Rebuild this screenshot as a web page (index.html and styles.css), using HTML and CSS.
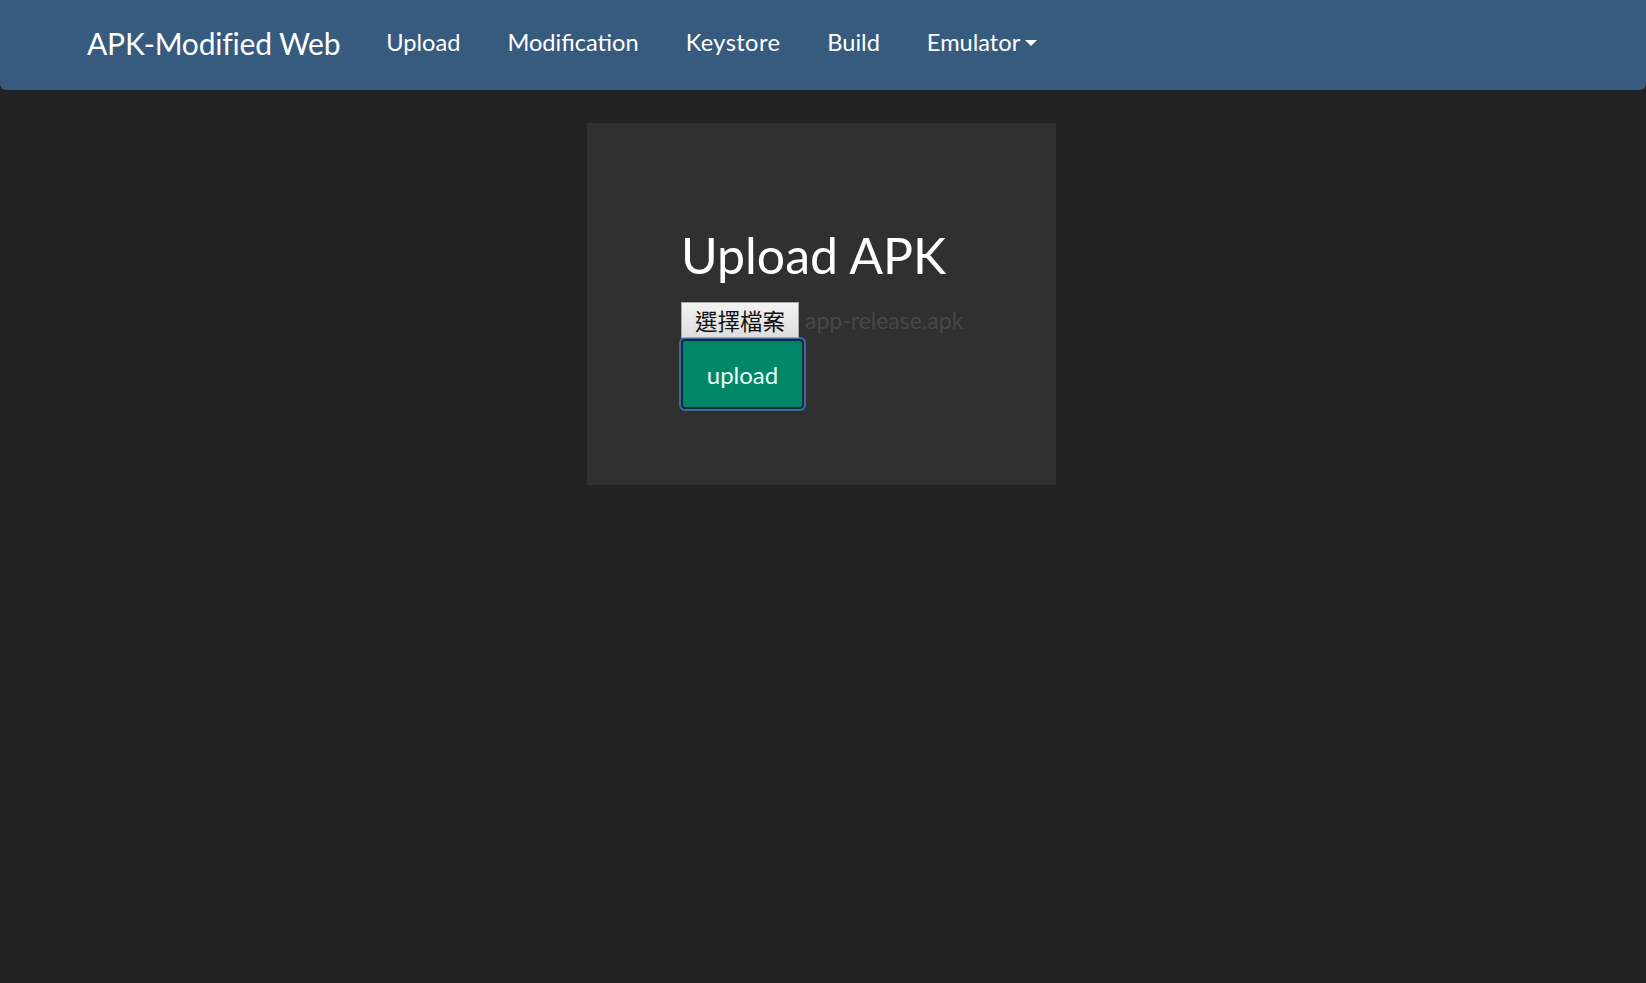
FILE: index.html
```html
<!DOCTYPE html>
<html lang="en">
<head>
<meta charset="utf-8">
<title>APK-Modified Web</title>
<link rel="stylesheet" href="styles.css">
</head>
<body>
<nav class="navbar">
  <a class="brand" href="#">APK-Modified Web</a>
  <ul class="nav">
    <li><a href="#">Upload</a></li>
    <li><a href="#">Modification</a></li>
    <li><a href="#" class="wide">Keystore</a></li>
    <li><a href="#">Build</a></li>
    <li><a href="#" class="dropdown">Emulator<span class="caret"></span></a></li>
  </ul>
</nav>
<main class="main">
  <section class="card">
    <h1 class="title">Upload APK</h1>
    <div class="file-row">
      <span class="file-btn">選擇檔案</span>
      <span class="file-name">app-release.apk</span>
    </div>
    <button class="upload-btn" type="button">upload</button>
  </section>
</main>
</body>
</html>
```

FILE: styles.css
```css
html, body {
  margin: 0;
  padding: 0;
  height: 100%;
}
body {
  background: #222222;
  font-family: Lato, "Noto Sans", sans-serif;
  color: #ffffff;
}
.navbar {
  display: flex;
  align-items: center;
  height: 90px;
  background: #375a7f;
  border-radius: 0 0 6px 6px;
  padding: 0 0 7px 87px;
  box-sizing: border-box;
}
.brand {
  color: #ffffff;
  text-decoration: none;
  font-size: 30px;
  letter-spacing: -0.2px;
  margin-right: 46px;
  margin-top: 2px;
}
.nav {
  display: flex;
  list-style: none;
  margin: 0;
  padding: 0;
  gap: 47px;
}
.nav a {
  color: #ffffff;
  text-decoration: none;
  font-size: 23.6px;
  display: flex;
  align-items: center;
}
.nav a.wide {
  letter-spacing: 0.4px;
}
.caret {
  display: inline-block;
  width: 0;
  height: 0;
  margin-left: 5px;
  margin-top: 3px;
  border-top: 6px solid #ffffff;
  border-left: 6px solid transparent;
  border-right: 6px solid transparent;
}
.main {
  display: flex;
  justify-content: center;
  padding-top: 33px;
  padding-right: 3px;
}
.card {
  width: 469px;
  height: 362px;
  box-sizing: border-box;
  background: #303030;
  padding: 105px 0 0 94px;
}
.title {
  margin: 0 0 19px 0;
  font-size: 50px;
  font-weight: 400;
  line-height: 1.1;
  color: #ffffff;
}
.file-row {
  display: flex;
  align-items: center;
  height: 36px;
}
.file-btn {
  display: flex;
  align-items: center;
  justify-content: center;
  box-sizing: border-box;
  width: 118px;
  height: 36px;
  background: linear-gradient(#f4f4f4, #dedede);
  border: 1px solid #a9a9a9;
  color: #111111;
  font-family: "Noto Sans CJK TC", sans-serif;
  font-size: 22.5px;
}
.file-name {
  margin-left: 6px;
  color: #474747;
  font-size: 23px;
}
.upload-btn {
  display: block;
  width: 123px;
  height: 70px;
  margin-top: 1px;
  box-sizing: border-box;
  background: #00876a;
  border: 2px solid #16283b;
  border-radius: 4px;
  box-shadow: 0 0 0 2px #3e6aa0;
  color: #eefff8;
  font-family: Lato, sans-serif;
  font-size: 24px;
  padding: 0;
}
```
